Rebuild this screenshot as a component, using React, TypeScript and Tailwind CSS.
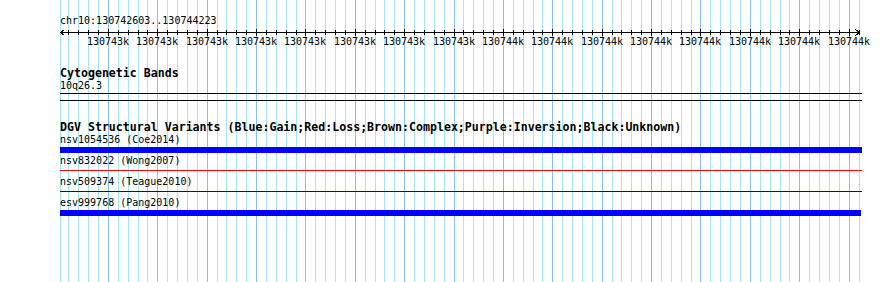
const START = 130742603;
const END = 130744223;
const LEFT = 60;
const WIDTH = 800;

const toX = (bp: number) => LEFT + ((bp - START) / (END - START)) * WIDTH;

const ticks: { bp: number; x: number; major: boolean }[] = [];
for (let bp = 130742620; bp <= END; bp += 20) {
  ticks.push({ bp, x: Math.round(toX(bp)), major: bp % 100 === 0 });
}

const mono = "font-['DejaVu_Sans_Mono','Liberation_Mono',monospace]";

function Grid() {
  return (
    <svg className="absolute inset-0" width={890} height={282} shapeRendering="crispEdges">
      <rect x={LEFT} y={0} width={1} height={282} fill="#a6e6ee" />
      {ticks.map((t) => (
        <rect
          key={t.bp}
          x={t.x}
          y={0}
          width={1}
          height={282}
          fill={t.major ? "#86c2ee" : "#a6e6ee"}
        />
      ))}
    </svg>
  );
}

function Ruler() {
  return (
    <svg width={890} height={22} className="block" shapeRendering="crispEdges">
      <rect x={LEFT} y={5} width={800} height={1} fill="#000" />
      <path d="M64.5 2.5 L60.5 5.5 L64.5 8.5" fill="none" stroke="#000" strokeWidth={1} />
      <path d="M855.5 2.5 L859.5 5.5 L855.5 8.5" fill="none" stroke="#000" strokeWidth={1} />
      {ticks.map((t) => (
        <rect key={t.bp} x={t.x} y={t.major ? 2 : 3} width={1} height={t.major ? 7 : 5} fill="#000" />
      ))}
      {ticks
        .filter((t) => t.major)
        .map((t) => (
          <text
            key={t.bp}
            x={t.x}
            y={17.5}
            textAnchor="middle"
            fontSize={10}
            fontFamily="'DejaVu Sans Mono','Liberation Mono',monospace"
            fill="#000"
          >
            {Math.round(t.bp / 1000)}k
          </text>
        ))}
    </svg>
  );
}

function Label({ children, className = "" }: { children: string; className?: string }) {
  return <div className={`pl-[60px] h-[12px] text-[10px] leading-[12px] whitespace-pre ${className}`}>{children}</div>;
}

function Heading({ children, className = "" }: { children: string; className?: string }) {
  return (
    <div className={`pl-[60px] h-[13px] text-[11.6px] leading-[13px] font-bold whitespace-pre ${className}`}>
      {children}
    </div>
  );
}

export default function App() {
  return (
    <div className={`relative w-[890px] h-[282px] overflow-hidden bg-white text-black ${mono}`}>
      <Grid />
      <div className="relative">
        <Label className="pt-[15px] h-[27px]">chr10:130742603..130744223</Label>
        <Ruler />

        <Heading className="mt-[18px]">Cytogenetic Bands</Heading>
        <Label>10q26.3</Label>
        <div className="ml-[60px] mt-[1px] w-[802px] h-[8px] border-y border-black" />

        <Heading className="mt-[20px]">
          DGV Structural Variants (Blue:Gain;Red:Loss;Brown:Complex;Purple:Inversion;Black:Unknown)
        </Heading>
        <Label>nsv1054536 (Coe2014)</Label>
        <div className="ml-[60px] mt-[1px] w-[802px] h-[6px] bg-[#0000ff]" />

        <Label className="mt-[2px]">nsv832022 (Wong2007)</Label>
        <div className="ml-[60px] mt-[3px] w-[802px] h-[1px] bg-[#ff0000]" />

        <Label className="mt-[5px]">nsv509374 (Teague2010)</Label>
        <div className="ml-[60px] mt-[3px] w-[802px] h-[1px] bg-[#0000c0]" />

        <Label className="mt-[5px]">esv999768 (Pang2010)</Label>
        <div className="ml-[60px] mt-[1px] w-[801px] h-[6px] bg-[#0000ff]" />
      </div>
    </div>
  );
}
